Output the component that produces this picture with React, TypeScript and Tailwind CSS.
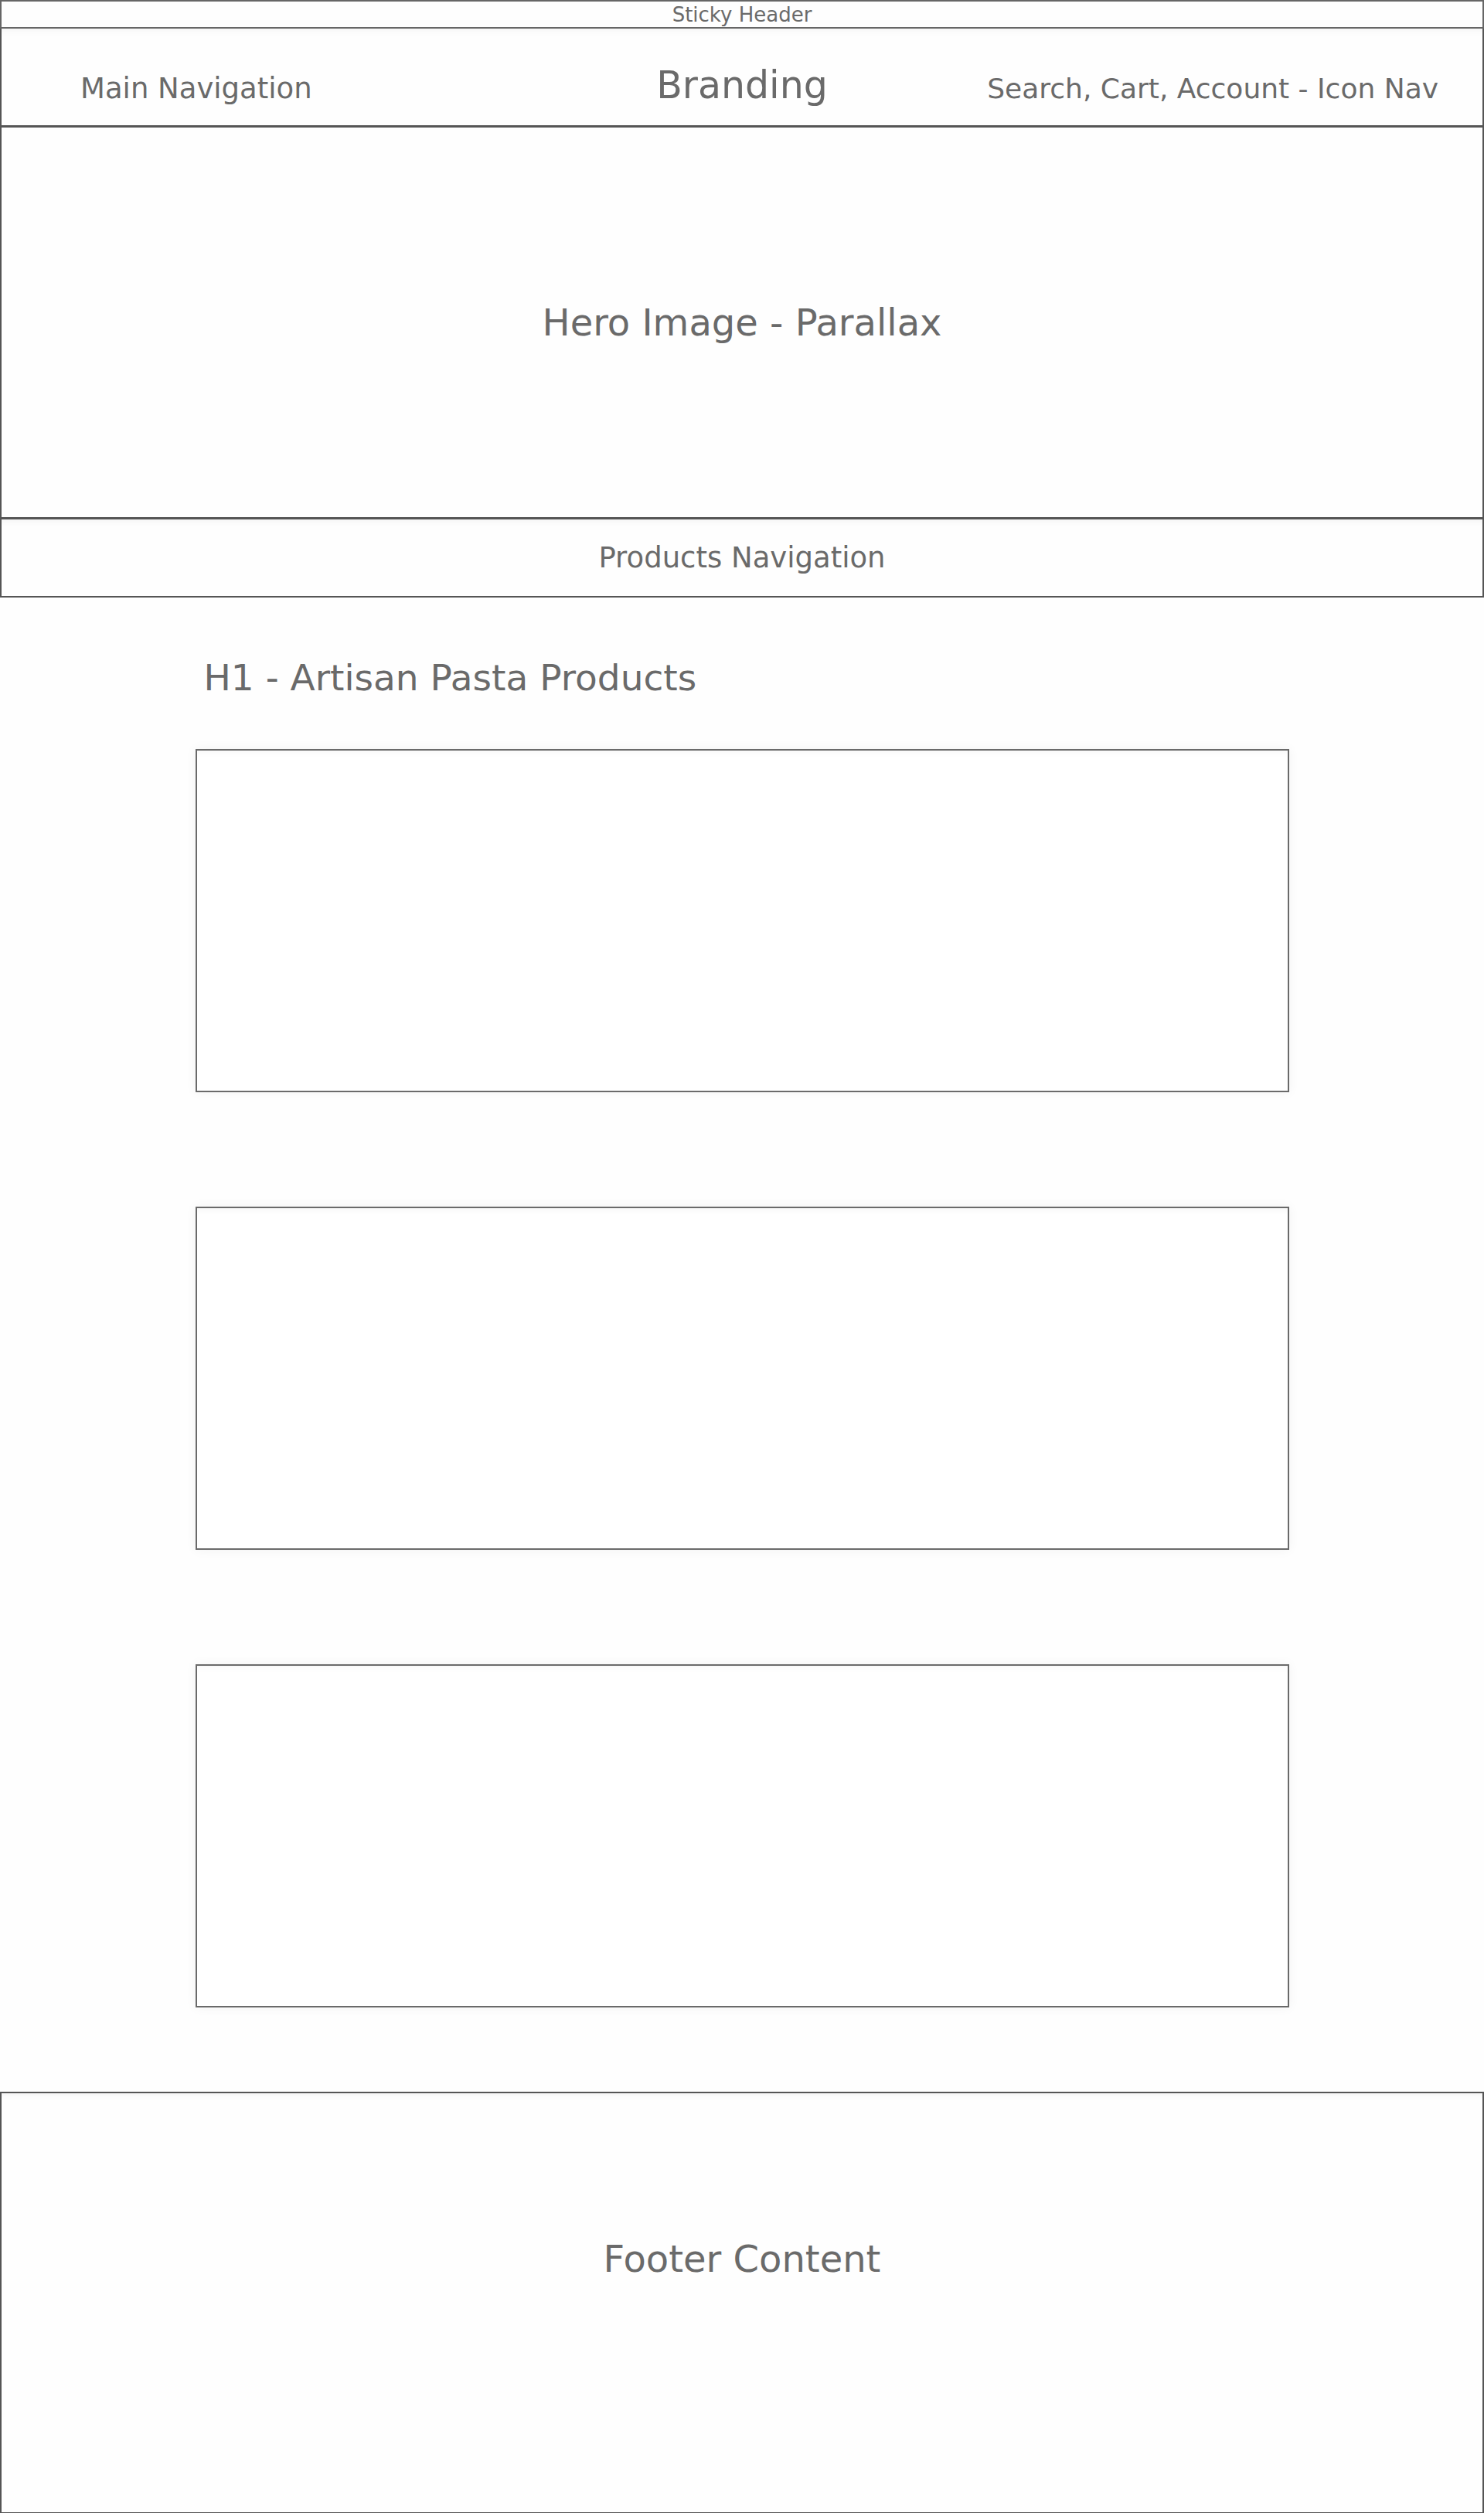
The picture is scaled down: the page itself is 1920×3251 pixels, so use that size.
import * as React from "react"

const sectionText = "text-[#6a6a6a] leading-none"

function ProductSlot() {
    return (
        <div className="w-[1415px] h-[444px] mx-auto border-2 border-[#6a6a6a] bg-white shadow-[0_0_14px_rgba(0,0,0,0.05),inset_0_10px_10px_-8px_rgba(0,0,0,0.04)]" />
    )
}

export default function App() {
    return (
        <div className="w-[1920px] min-h-[3251px] bg-[#fefefe] font-['DejaVu_Sans',sans-serif]">
            {/* Sticky header label */}
            <div className="h-[37px] border-2 border-[#666] flex items-center justify-center">
                <span className={`${sectionText} text-[26px]`}>Sticky Header</span>
            </div>

            {/* Header row */}
            <header className="h-[128px] border-x-2 border-b-[3px] border-[#555] grid grid-cols-[1fr_auto_1fr] items-baseline pt-[49px] px-[57px] shadow-[inset_0_10px_10px_-8px_rgba(0,0,0,0.05)]">
                <span className={`${sectionText} text-[37px] ml-[45px]`}>Main Navigation</span>
                <span className={`${sectionText} text-[49px]`}>Branding</span>
                <span className={`${sectionText} text-[36px] justify-self-end`}>Search, Cart, Account - Icon Nav</span>
            </header>

            {/* Hero */}
            <section className="h-[507px] border-x-2 border-b-[3px] border-[#555] flex items-center justify-center">
                <span className={`${sectionText} text-[48px]`}>Hero Image - Parallax</span>
            </section>

            {/* Products nav */}
            <nav className="h-[101px] border-x-2 border-b-2 border-[#555] flex items-center justify-center shadow-[inset_0_10px_10px_-8px_rgba(0,0,0,0.05)]">
                <span className={`${sectionText} text-[37px]`}>Products Navigation</span>
            </nav>

            {/* Products */}
            <main className="pt-[80px] pb-[109px]">
                <div className="w-[1415px] mx-auto">
                    <h1 className={`${sectionText} text-[47px] font-normal pl-[11px]`}>H1 - Artisan Pasta Products</h1>
                </div>
                <div className="mt-[69px] flex flex-col gap-[148px]">
                    <ProductSlot />
                    <ProductSlot />
                    <ProductSlot />
                </div>
            </main>

            {/* Footer */}
            <footer className="h-[546px] border-2 border-[#555] flex justify-center pt-[190px] shadow-[inset_0_10px_10px_-8px_rgba(0,0,0,0.05)]">
                <span className={`${sectionText} text-[48px]`}>Footer Content</span>
            </footer>
        </div>
    )
}
